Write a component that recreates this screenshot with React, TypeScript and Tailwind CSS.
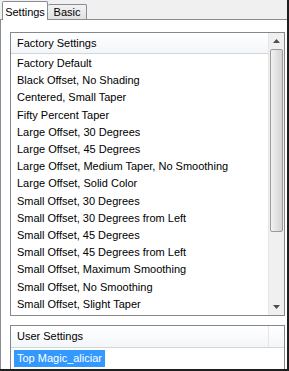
import React from "react";

const factoryItems = [
  "Factory Default",
  "Black Offset, No Shading",
  "Centered, Small Taper",
  "Fifty Percent Taper",
  "Large Offset, 30 Degrees",
  "Large Offset, 45 Degrees",
  "Large Offset, Medium Taper, No Smoothing",
  "Large Offset, Solid Color",
  "Small Offset, 30 Degrees",
  "Small Offset, 30 Degrees from Left",
  "Small Offset, 45 Degrees",
  "Small Offset, 45 Degrees from Left",
  "Small Offset, Maximum Smoothing",
  "Small Offset, No Smoothing",
  "Small Offset, Slight Taper",
];

function ListHeader({ label }: { label: string }) {
  return (
    <div className="flex h-[21px] shrink-0 items-center border-b border-[#d5d5d5] bg-gradient-to-b from-white to-[#f3f6f9] pl-[6px]">
      {label}
    </div>
  );
}

function ScrollBar() {
  return (
    <div className="flex w-[16px] shrink-0 flex-col border-l border-[#e6e6e6] bg-[#f0f0f0]">
      <div className="flex h-[16px] items-center justify-center">
        <svg width="7" height="4" viewBox="0 0 7 4">
          <path d="M0 4 L3.5 0 L7 4 Z" fill="#4d4d4d" />
        </svg>
      </div>
      <div className="mx-[1px] h-[183px] rounded-[2px] border border-[#9a9a9a] bg-gradient-to-r from-[#f3f3f3] via-[#e2e2e2] to-[#d4d4d4]" />
      <div className="flex-1" />
      <div className="flex h-[16px] items-center justify-center">
        <svg width="7" height="4" viewBox="0 0 7 4">
          <path d="M0 0 L3.5 4 L7 0 Z" fill="#4d4d4d" />
        </svg>
      </div>
    </div>
  );
}

export default function App() {
  return (
    <div
      className="flex h-[371px] w-[289px] flex-col overflow-hidden border-r-2 border-b-2 border-[#1e1e1e] bg-[#f0f0f0] text-[11px] text-black"
      style={{ fontFamily: '"Liberation Sans", Arial, sans-serif' }}
    >
      <div className="flex h-[19px] shrink-0 items-end pl-[2px]">
        <div className="relative z-10 -mb-px flex h-[19px] w-[46px] items-start justify-center rounded-t-[2px] border border-b-0 border-[#898c95] bg-white pt-[2px]">
          Settings
        </div>
        <div className="flex h-[15px] w-[39px] items-center justify-center rounded-t-[2px] border border-b-0 border-l-0 border-[#898c95] bg-gradient-to-b from-[#f2f2f2] to-[#e1e1e1] pt-[1px]">
          Basic
        </div>
      </div>
      <div className="flex min-h-0 flex-1 flex-col gap-[9px] border border-b-0 border-r-0 border-[#898c95] bg-white pl-[9px] pr-[2px] pt-[12px]">
        <div className="flex h-[284px] shrink-0 border border-[#828790]">
          <div className="flex min-w-0 flex-1 flex-col">
            <ListHeader label="Factory Settings" />
            <div className="pt-[1px]">
              {factoryItems.map((item) => (
                <div key={item} className="whitespace-nowrap pl-[6px] leading-[17.2px]">
                  {item}
                </div>
              ))}
            </div>
          </div>
          <ScrollBar />
        </div>
        <div className="flex min-h-0 flex-1 border border-b-0 border-[#828790]">
          <div className="flex min-w-0 flex-1 flex-col">
            <div className="flex h-[22px] shrink-0 items-center border-b border-[#d5d5d5] bg-gradient-to-b from-white to-[#f3f6f9] pl-[6px]">
              <span className="flex-1">User Settings</span>
              <span className="h-full w-[16px] border-l border-[#e6e6e6]" />
            </div>
            <div className="pl-[3px] pt-[2px]">
              <span className="inline-block bg-[#3399ff] px-[3px] leading-[17px] text-white">
                Top Magic_aliciar
              </span>
            </div>
          </div>
        </div>
      </div>
    </div>
  );
}
